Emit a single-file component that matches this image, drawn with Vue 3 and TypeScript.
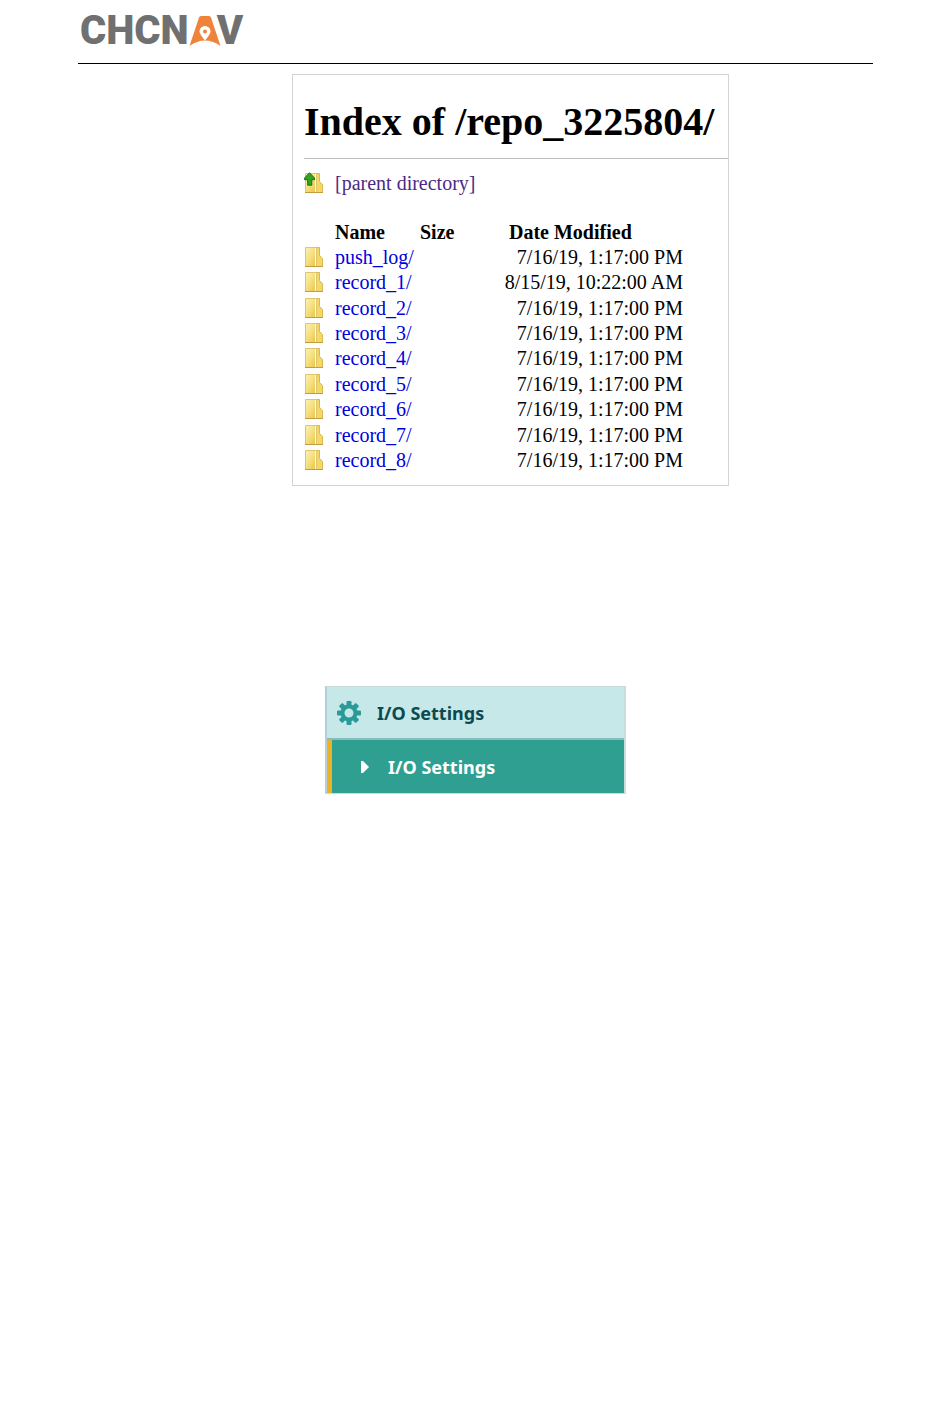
<script setup lang="ts">
interface Entry {
  name: string
  modified: string
}

const early = '7/16/19, 1:17:00 PM'
const entries: Entry[] = [
  { name: 'push_log/', modified: early },
  { name: 'record_1/', modified: '8/15/19, 10:22:00 AM' },
  ...[2, 3, 4, 5, 6, 7, 8].map((n) => ({ name: `record_${n}/`, modified: early })),
]
</script>

<template>
  <div class="page">
    <svg class="defs" width="0" height="0" aria-hidden="true">
      <defs>
        <linearGradient id="folder-fill" x1="0" y1="0" x2="1" y2="1">
          <stop offset="0" stop-color="#fbf3b4" />
          <stop offset="0.5" stop-color="#f5de7c" />
          <stop offset="1" stop-color="#e8c23e" />
        </linearGradient>
        <symbol id="folder" viewBox="0 0 20 22">
          <path d="M12 1.500h3.500v8l3 3v8H12z" fill="#f3d868" stroke="#d8b850" />
          <path d="M1.500 1.500h11v19h-11z" fill="url(#folder-fill)" stroke="#dfc570" />
          <path d="M11.500 2v18" stroke="#fffbe0" />
          <path d="M1 20.500h18" stroke="#c39c40" />
        </symbol>
      </defs>
    </svg>

    <header class="top">
      <div class="logo" aria-label="CHCNAV">
        <span>CHCN</span>
        <svg class="pin" viewBox="0 0 32 30" aria-hidden="true">
          <path d="M12 0h8Q21.500 0 22 1.500L31.500 30Q24 24.500 16 24.500T.500 30L10 1.500Q10.500 0 12 0z" fill="#ee8339" />
          <path d="M16 24.500Q10.500 18 10.500 15.500a5.500 5.500 0 0 1 11 0Q21.500 18 16 24.500z" fill="#fff" />
          <circle cx="16" cy="15.500" r="2" fill="#ee8339" />
        </svg>
        <span class="tail">V</span>
      </div>
    </header>

    <main>
      <div class="listing-wrap">
        <section class="listing">
          <h1>Index of /repo_3225804/</h1>
          <div class="parent">
            <svg class="icon" viewBox="0 0 20 22" aria-hidden="true">
              <use href="#folder" />
              <path d="M5.500 .8L10.500 6v1.700H7.800v5.500H3.700V7.700H.6V6z" fill="#35a51e" stroke="#176f16" />
            </svg>
            <a href="#parent">[parent directory]</a>
          </div>
          <table>
            <thead>
              <tr>
                <th class="c-icon"></th>
                <th class="c-name">Name</th>
                <th class="c-size">Size</th>
                <th class="c-date">Date Modified</th>
              </tr>
            </thead>
            <tbody>
              <tr v-for="entry in entries" :key="entry.name">
                <td><svg class="icon" viewBox="0 0 20 22" aria-hidden="true"><use href="#folder" /></svg></td>
                <td><a :href="'#' + entry.name">{{ entry.name }}</a></td>
                <td></td>
                <td class="date">{{ entry.modified }}</td>
              </tr>
            </tbody>
          </table>
        </section>
      </div>

      <nav class="menu">
        <button type="button" class="group">
          <svg class="gear" viewBox="0 0 24 24" aria-hidden="true">
            <g fill="#2a9a98">
              <rect v-for="n in 8" :key="n" x="9.500" y="0" width="5" height="6" rx="1" :transform="`rotate(${n * 45} 12 12)`" />
            </g>
            <circle cx="12" cy="12" r="6.500" fill="none" stroke="#2a9a98" stroke-width="4" />
          </svg>
          I/O Settings
        </button>
        <a class="item" href="#io-settings">
          <svg class="arrow" viewBox="0 0 8 12" aria-hidden="true"><path d="M0 0h2l6 6-6 6H0z" fill="#fff" /></svg>
          I/O Settings
        </a>
      </nav>
    </main>
  </div>
</template>

<style>
body {
  margin: 0;
  background: #fff;
}
</style>

<style scoped>
.page {
  padding: 0 77px 0 78px;
  font-family: "Liberation Serif", serif;
  font-size: 20px;
  color: #000;
}
.defs {
  display: block;
}
.top {
  padding-top: 13px;
  border-bottom: 1px solid #000;
}
.logo {
  display: flex;
  align-items: center;
  height: 36px;
  padding: 0 0 14px 2px;
  font: 900 40px/36px Roboto, sans-serif;
  color: #707070;
}
.pin {
  width: 32px;
  height: 30px;
}
.tail {
  margin-left: -4px;
}
.listing-wrap {
  display: flex;
  justify-content: center;
  padding: 10px 0 0 70px;
}
.listing {
  box-sizing: border-box;
  width: 437px;
  padding: 24px 0 12px 11px;
  border: 1px solid #d4d4d4;
}
h1 {
  margin: 0 0 12px;
  padding-bottom: 13px;
  border-bottom: 1px solid #bdbdbd;
  font-size: 40px;
  line-height: 46px;
  white-space: nowrap;
}
.parent {
  display: flex;
  align-items: center;
  gap: 11px;
  height: 24px;
  margin-bottom: 25px;
}
.icon {
  display: block;
  width: 20px;
  height: 22px;
}
a {
  color: #0000e0;
  text-decoration: none;
}
.parent a {
  color: #4b2a86;
}
table {
  width: 379px;
  height: 253px;
  table-layout: fixed;
  border-collapse: collapse;
  line-height: 24px;
}
th,
td {
  padding: 0;
  text-align: left;
  white-space: nowrap;
}
.c-icon {
  width: 31px;
}
.c-name {
  width: 85px;
}
.c-size {
  width: 75px;
}
.c-date {
  padding-left: 14px;
}
.date {
  text-align: right;
}
.menu {
  box-sizing: border-box;
  width: 301px;
  margin: 200px auto 0;
  border: 1px solid #cbdcdf;
  border-left: 2px solid #b3cfdc;
  border-right-width: 2px;
  font: 700 18px/24px "Noto Sans", sans-serif;
}
.group,
.item {
  display: flex;
  align-items: center;
  box-sizing: border-box;
  width: 100%;
  height: 53px;
  font: inherit;
}
.group {
  gap: 16px;
  padding: 0 0 0 10px;
  border: 0;
  border-bottom: 2px solid #86bdbd;
  background: #c7e8e9;
  color: #0b4a50;
}
.gear {
  width: 24px;
  height: 24px;
}
.item {
  gap: 19px;
  padding-left: 29px;
  border-left: 5px solid #ecb424;
  background: #2f9f92;
  color: #fff;
}
.arrow {
  width: 8px;
  height: 12px;
}
</style>
